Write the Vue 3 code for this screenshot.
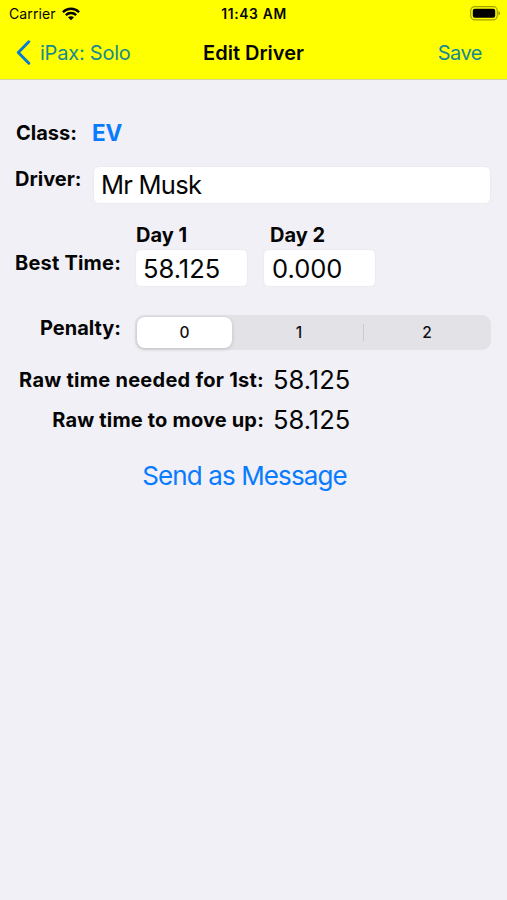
<script setup>
import { ref } from 'vue'

const driver = ref('Mr Musk')
const days = ref([
  { label: 'Day 1', time: '58.125', cls: 'day-one' },
  { label: 'Day 2', time: '0.000', cls: 'day-two' },
])
const penalties = [0, 1, 2]
const penalty = ref(0)
const results = [
  { label: 'Raw time needed for 1st:', value: '58.125', cls: 'needed' },
  { label: 'Raw time to move up:', value: '58.125', cls: 'move-up' },
]
</script>

<template>
  <div class="screen">
    <header class="top">
      <div class="status">
        <div class="carrier">
          <span class="carrier-name">Carrier</span>
          <svg class="wifi" viewBox="0 0 18 14" width="18" height="14">
            <g fill="none" stroke="#000" stroke-width="2.3">
              <path d="M0.9 5.2C5.6 0.6 12.4 0.6 17.1 5.2" />
              <path d="M3.8 8.1C6.8 5.3 11.2 5.3 14.2 8.1" />
            </g>
            <path d="M9 13.3 6 10.3C7.7 8.8 10.3 8.8 12 10.3Z" />
          </svg>
        </div>
        <span class="clock">11:43 AM</span>
        <svg class="battery" viewBox="0 0 31 15" width="31" height="15">
          <rect x="0.7" y="0.7" width="26.6" height="13.1" rx="4" fill="none" stroke="#a3a300" stroke-width="1.2" />
          <rect x="2.8" y="2.8" width="22.4" height="8.9" rx="2" fill="#000" />
          <path d="M28.5 5.1C30.6 6 30.6 8.6 28.5 9.5Z" fill="#8f8f00" />
        </svg>
      </div>
      <nav class="nav">
        <a class="back">
          <svg viewBox="0 0 15 25" width="15" height="25">
            <path d="M12.8 1.8 2.3 12.5 12.8 23.2" fill="none" stroke="#087bd0" stroke-width="2.9" stroke-linecap="round" stroke-linejoin="round" />
          </svg>
          <span class="back-text">iPax: Solo</span>
        </a>
        <span class="title">Edit Driver</span>
        <a class="save">Save</a>
      </nav>
    </header>

    <main class="form">
      <div class="row class-row">
        <span class="label class-label">Class:</span>
        <a class="class-value">EV</a>
      </div>
      <div class="row driver-row">
        <span class="label driver-label">Driver:</span>
        <div class="field driver-field"><span class="driver-name">{{ driver }}</span></div>
      </div>
      <div class="row times-row">
        <span class="label best-label">Best Time:</span>
        <div v-for="d in days" :key="d.label" class="day" :class="d.cls">
          <span class="label day-label">{{ d.label }}</span>
          <div class="field"><span class="time">{{ d.time }}</span></div>
        </div>
      </div>
      <div class="row penalty-row">
        <span class="label penalty-label">Penalty:</span>
        <div class="segments">
          <button v-for="p in penalties" :key="p" class="segment" :class="{ on: p === penalty }" @click="penalty = p">{{ p }}</button>
        </div>
      </div>
      <div v-for="r in results" :key="r.label" class="row result-row">
        <div class="result-label"><span class="label" :class="r.cls">{{ r.label }}</span></div>
        <span class="value">{{ r.value }}</span>
      </div>
      <div class="send-row"><a class="send">Send as Message</a></div>
    </main>
  </div>
</template>

<style>
body {
  background: #f1f0f6;
}
</style>

<style scoped>
.screen {
  height: 900px;
  overflow: hidden;
  background: #f1f0f6;
  color: #050505;
  font-family: Inter, "Liberation Sans", sans-serif;
  white-space: nowrap;
}
.top {
  box-sizing: border-box;
  height: 80px;
  background: #ffff00;
  border-bottom: 1px solid #d5d49c;
}
.status {
  display: grid;
  grid-template-columns: 1fr auto 1fr;
  align-items: center;
  height: 27px;
  padding: 0 6px 0 9px;
}
.carrier {
  display: flex;
  align-items: center;
  gap: 6px;
}
.carrier-name {
  font-size: 14px;
  letter-spacing: 0.12px;
}
.clock {
  padding-right: 2px;
  font-size: 13.8px;
  font-weight: 600;
  letter-spacing: 0.68px;
}
.battery {
  justify-self: end;
}
.nav {
  display: grid;
  grid-template-columns: 1fr auto 1fr;
  align-items: center;
  height: 50px;
  padding: 1px 25px 0 16px;
  font-size: 20px;
}
.back {
  display: flex;
  align-items: center;
  gap: 9px;
}
.back svg {
  margin-top: -1px;
}
.back-text,
.save {
  color: #168a91;
}
.back-text {
  letter-spacing: -0.22px;
}
.title {
  padding-left: 9px;
  font-weight: 600;
}
.save {
  justify-self: end;
  letter-spacing: -0.5px;
}
.form {
  padding: 36px 16px 0 15px;
}
.row {
  display: flex;
}
.label {
  font-size: 20px;
  font-weight: 700;
  line-height: 34px;
}
.class-row {
  height: 50px;
}
.class-label {
  margin: 0 15px 0 1px;
}
.class-value {
  color: #087bff;
  font-size: 22.5px;
  font-weight: 700;
  line-height: 34px;
}
.driver-row {
  height: 51px;
}
.driver-label {
  width: 78px;
  line-height: 27px;
}
.field {
  box-sizing: border-box;
  height: 38px;
  padding-left: 8px;
  border: 1px solid #ecebf0;
  border-radius: 6px;
  background: #fff;
  font-size: 25.5px;
  line-height: 37px;
}
.driver-field {
  flex: 1;
  padding-left: 7px;
  line-height: 36px;
}
.driver-name {
  letter-spacing: -0.75px;
}
.times-row {
  height: 98px;
}
.best-label {
  width: 120px;
  padding-top: 29px;
  letter-spacing: 0.2px;
}
.day {
  display: flex;
  flex-direction: column;
  width: 113px;
  margin-right: 15px;
}
.day .field {
  padding-left: 7px;
}
.day-two .field {
  padding-left: 8px;
}
.day-label {
  height: 32px;
  margin-left: 1px;
  line-height: 36px;
}
.day-two .day-label {
  margin-left: 7px;
}
.penalty-row {
  height: 44px;
}
.penalty-label {
  width: 106px;
  margin-right: 14px;
  text-align: right;
  line-height: 26px;
}
.segments {
  display: flex;
  flex: 1;
  box-sizing: border-box;
  height: 35px;
  padding: 2px 0 2px 2px;
  border-radius: 9px;
  background: #e3e2e7;
}
.segment {
  flex: 1;
  position: relative;
  padding: 0;
  border: 0;
  border-radius: 8px;
  background: none;
  color: #111;
  font: 500 15.5px/31px Inter, "Liberation Sans", sans-serif;
}
.segment.on {
  flex: 0 0 95px;
  margin-right: 3px;
  background: #fff;
  box-shadow: 0 1px 4px rgba(0, 0, 0, 0.16);
}
.segment:last-child::before {
  content: "";
  position: absolute;
  left: 0;
  top: 7px;
  width: 1px;
  height: 17px;
  background: #cbcad0;
}
.result-row {
  height: 40px;
  align-items: center;
}
.result-label {
  width: 249px;
  margin-right: 9px;
  padding-top: 1px;
  text-align: right;
}
.needed {
  letter-spacing: 0.26px;
}
.move-up {
  letter-spacing: 0.17px;
}
.value {
  font-size: 25.5px;
}
.send-row {
  padding: 21px 17px 0 0;
  text-align: center;
}
.send {
  color: #087bff;
  font-size: 26px;
  letter-spacing: -0.88px;
  line-height: 32px;
}
</style>
